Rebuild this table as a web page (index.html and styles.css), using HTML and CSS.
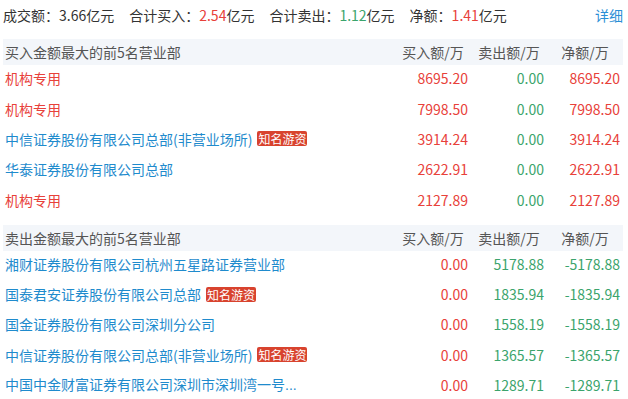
FILE: index.html
```html
<!DOCTYPE html>
<html lang="zh-CN">
<head>
<meta charset="utf-8">
<link rel="stylesheet" href="styles.css">
</head>
<body>
<div class="page">
  <div class="summary">
    <div class="stats">
      <span class="stat">成交额：<span class="v">3.66</span>亿元</span>
      <span class="stat">合计买入：<span class="v red">2.54</span>亿元</span>
      <span class="stat">合计卖出：<span class="v green">1.12</span>亿元</span>
      <span class="stat">净额：<span class="v red">1.41</span>亿元</span>
    </div>
    <a class="more">详细</a>
  </div>

  <div class="table">
    <div class="row head">
      <div class="name">买入金额最大的前5名营业部</div>
      <div class="col">买入额/万</div>
      <div class="col">卖出额/万</div>
      <div class="col">净额/万</div>
    </div>
    <div class="row">
      <div class="name"><span class="txt red">机构专用</span></div>
      <div class="num red">8695.20</div>
      <div class="num green">0.00</div>
      <div class="num red">8695.20</div>
    </div>
    <div class="row">
      <div class="name"><span class="txt red">机构专用</span></div>
      <div class="num red">7998.50</div>
      <div class="num green">0.00</div>
      <div class="num red">7998.50</div>
    </div>
    <div class="row">
      <div class="name"><span class="txt blue">中信证券股份有限公司总部(非营业场所)</span><span class="badge">知名游资</span></div>
      <div class="num red">3914.24</div>
      <div class="num green">0.00</div>
      <div class="num red">3914.24</div>
    </div>
    <div class="row">
      <div class="name"><span class="txt blue">华泰证券股份有限公司总部</span></div>
      <div class="num red">2622.91</div>
      <div class="num green">0.00</div>
      <div class="num red">2622.91</div>
    </div>
    <div class="row">
      <div class="name"><span class="txt red">机构专用</span></div>
      <div class="num red">2127.89</div>
      <div class="num green">0.00</div>
      <div class="num red">2127.89</div>
    </div>
  </div>

  <div class="table second">
    <div class="row head">
      <div class="name">卖出金额最大的前5名营业部</div>
      <div class="col">买入额/万</div>
      <div class="col">卖出额/万</div>
      <div class="col">净额/万</div>
    </div>
    <div class="row">
      <div class="name"><span class="txt blue">湘财证券股份有限公司杭州五星路证券营业部</span></div>
      <div class="num red">0.00</div>
      <div class="num green">5178.88</div>
      <div class="num green">-5178.88</div>
    </div>
    <div class="row">
      <div class="name"><span class="txt blue">国泰君安证券股份有限公司总部</span><span class="badge">知名游资</span></div>
      <div class="num red">0.00</div>
      <div class="num green">1835.94</div>
      <div class="num green">-1835.94</div>
    </div>
    <div class="row">
      <div class="name"><span class="txt blue">国金证券股份有限公司深圳分公司</span></div>
      <div class="num red">0.00</div>
      <div class="num green">1558.19</div>
      <div class="num green">-1558.19</div>
    </div>
    <div class="row">
      <div class="name"><span class="txt blue">中信证券股份有限公司总部(非营业场所)</span><span class="badge">知名游资</span></div>
      <div class="num red">0.00</div>
      <div class="num green">1365.57</div>
      <div class="num green">-1365.57</div>
    </div>
    <div class="row">
      <div class="name"><span class="txt blue">中国中金财富证券有限公司深圳市深圳湾一号<span class="dots">...</span></span></div>
      <div class="num red">0.00</div>
      <div class="num green">1289.71</div>
      <div class="num green">-1289.71</div>
    </div>
  </div>
</div>
</body>
</html>
```

FILE: styles.css
```css
* { box-sizing: border-box; }
html, body { margin: 0; padding: 0; background: #fff; }
body {
  font-family: "Noto Sans CJK SC", "Noto Sans", sans-serif;
  font-size: 14px;
  color: #333;
  width: 628px;
  overflow: hidden;
}
.page { padding: 0 5px 0 3px; }
.summary {
  display: flex;
  justify-content: space-between;
  align-items: center;
  height: 30px;
  line-height: 18px;
}
.stats { display: flex; gap: 15px; }
.stat { white-space: nowrap; }
.more { color: #2b8fd6; text-decoration: none; }
.red { color: #e8413a; }
.green { color: #3ba46c; }
.blue { color: #1f8bcd; }

.table { margin-top: 9px; }
.table.second { margin-top: 8px; }
.row {
  display: grid;
  grid-template-columns: 1fr 76px 76px 76px;
  height: 30.4px;
  padding-bottom: 4px;
  align-items: center;
  line-height: 18px;
}
.second .row { height: 30.2px; }
.row.head {
  height: 26px;
  padding-bottom: 0;
  background: #f3f6fa;
  color: #555;
}
.name {
  padding-left: 2px;
  display: flex;
  align-items: center;
  min-width: 0;
  white-space: nowrap;
}
.txt { white-space: nowrap; }
.dots { font-family: "Liberation Sans", sans-serif; }
.col { text-align: center; }
.num { text-align: right; padding-right: 3px; }
.badge {
  margin-left: 5px;
  background: #d8432e;
  color: #fff;
  font-size: 12px;
  line-height: 15px;
  padding: 0 1px;
  border-radius: 2px;
}
```
